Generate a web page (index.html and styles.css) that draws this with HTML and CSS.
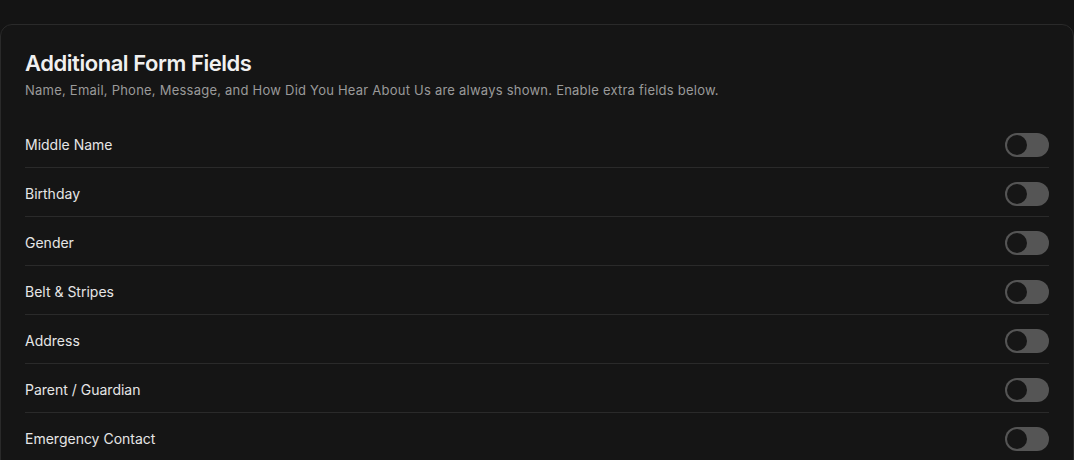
FILE: index.html
```html
<!DOCTYPE html>
<html>
<head>
<meta charset="utf-8">
<link rel="stylesheet" href="styles.css">
</head>
<body>
<section class="card">
  <h2 class="title">Additional Form Fields</h2>
  <p class="subtitle">Name, Email, Phone, Message, and How Did You Hear About Us are always shown. Enable extra fields below.</p>
  <div class="list">
    <div class="row"><span class="label">Middle Name</span><span class="toggle"><span class="knob"></span></span></div>
    <div class="row"><span class="label">Birthday</span><span class="toggle"><span class="knob"></span></span></div>
    <div class="row"><span class="label">Gender</span><span class="toggle"><span class="knob"></span></span></div>
    <div class="row"><span class="label">Belt &amp; Stripes</span><span class="toggle"><span class="knob"></span></span></div>
    <div class="row"><span class="label">Address</span><span class="toggle"><span class="knob"></span></span></div>
    <div class="row"><span class="label">Parent / Guardian</span><span class="toggle"><span class="knob"></span></span></div>
    <div class="row"><span class="label">Emergency Contact</span><span class="toggle"><span class="knob"></span></span></div>
  </div>
</section>
</body>
</html>
```
FILE: styles.css
```css
html, body {
  margin: 0;
  padding: 0;
  background: #141414;
  font-family: Inter, "Liberation Sans", sans-serif;
  color: #ededed;
  overflow: hidden;
}
body {
  padding-top: 24px;
  height: 460px;
  box-sizing: border-box;
}
.card {
  width: 1074px;
  box-sizing: border-box;
  background: #151515;
  border: 1px solid #2a2a2a;
  border-radius: 12px;
  padding: 24px 24px 24px 24px;
}
.title {
  margin: 0;
  font-size: 22px;
  font-weight: 600;
  line-height: 28px;
  letter-spacing: -0.45px;
  color: #f0f0f0;
}
.subtitle {
  margin: 4px 0 20px 0;
  font-size: 13px;
  line-height: 18px;
  letter-spacing: 0.23px;
  color: #9a9a9a;
}
.list {
  display: flex;
  flex-direction: column;
}
.row {
  display: flex;
  align-items: center;
  justify-content: space-between;
  padding: 14px 0 10px 0;
  border-bottom: 1px solid #2a2a2a;
}
.label {
  font-size: 14px;
  line-height: 24px;
  color: #e6e6e6;
}
.toggle {
  width: 44px;
  height: 24px;
  border-radius: 12px;
  background: #555555;
  display: flex;
  align-items: center;
  padding: 2px;
  box-sizing: border-box;
}
.knob {
  width: 20px;
  height: 20px;
  border-radius: 50%;
  background: #161616;
}
```
